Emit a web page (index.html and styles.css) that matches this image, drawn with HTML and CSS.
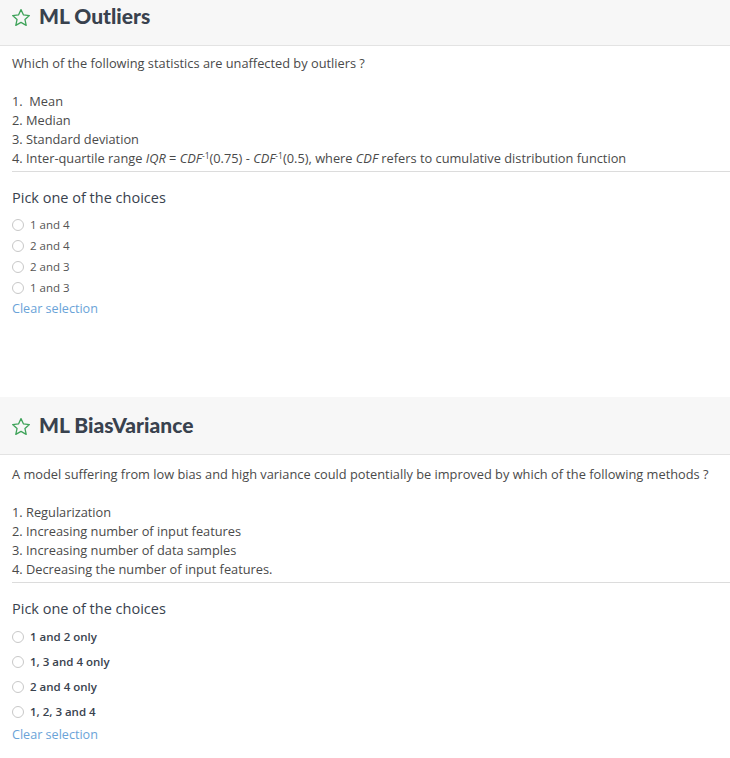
FILE: index.html
```html
<!DOCTYPE html>
<html>
<head>
<meta charset="utf-8">
<link rel="stylesheet" href="styles.css">
</head>
<body>
<section class="card card-first">
  <header class="card-head">
    <svg class="star" viewBox="0 0 20 20" width="20" height="20"><path d="M10 1.6l2.5 5.35 5.85.65-4.37 3.95 1.22 5.78L10 14.4l-5.2 2.93 1.22-5.78L1.65 7.6l5.85-.65z" fill="none" stroke="#3fa35a" stroke-width="1.3" stroke-linejoin="round"/></svg>
    <h2 class="title">ML Outliers</h2>
  </header>
  <div class="card-body">
    <p class="question">Which of the following statistics are unaffected by outliers ?</p>
    <div class="stmt">
      <div>1.&nbsp; Mean</div>
      <div>2. Median</div>
      <div>3. Standard deviation</div>
      <div>4. Inter-quartile range <i>IQR</i> = <i>CDF</i><sup>-1</sup>(0.75) - <i>CDF</i><sup>-1</sup>(0.5), where <i>CDF</i> refers to cumulative distribution function</div>
    </div>
    <h3 class="pick">Pick one of the choices</h3>
    <ul class="choices">
      <li><span class="radio"></span>1 and 4</li>
      <li><span class="radio"></span>2 and 4</li>
      <li><span class="radio"></span>2 and 3</li>
      <li><span class="radio"></span>1 and 3</li>
    </ul>
    <a class="clear">Clear selection</a>
  </div>
</section>

<section class="card card-second">
  <header class="card-head">
    <svg class="star" viewBox="0 0 20 20" width="20" height="20"><path d="M10 1.6l2.5 5.35 5.85.65-4.37 3.95 1.22 5.78L10 14.4l-5.2 2.93 1.22-5.78L1.65 7.6l5.85-.65z" fill="none" stroke="#3fa35a" stroke-width="1.3" stroke-linejoin="round"/></svg>
    <h2 class="title">ML BiasVariance</h2>
  </header>
  <div class="card-body">
    <p class="question">A model suffering from low bias and high variance could potentially be improved by which of the following methods ?</p>
    <div class="stmt">
      <div>1. Regularization</div>
      <div>2. Increasing number of input features</div>
      <div>3. Increasing number of data samples</div>
      <div>4. Decreasing the number of input features.</div>
    </div>
    <h3 class="pick">Pick one of the choices</h3>
    <ul class="choices choices-bold">
      <li><span class="radio"></span>1 and 2 only</li>
      <li><span class="radio"></span>1, 3 and 4 only</li>
      <li><span class="radio"></span>2 and 4 only</li>
      <li><span class="radio"></span>1, 2, 3 and 4</li>
    </ul>
    <a class="clear">Clear selection</a>
  </div>
</section>
</body>
</html>
```

FILE: styles.css
```css
html, body {
  margin: 0;
  padding: 0;
  background: #fff;
  font-family: "Open Sans", Lato, sans-serif;
  color: #444;
  overflow: hidden;
}

.card-first {
  margin-top: -12px;
}

.card-second {
  margin-top: 78px;
}

.card-head {
  height: 57px;
  background: #f7f7f7;
  border-bottom: 1px solid #e3e3e3;
  display: flex;
  align-items: center;
  padding-left: 11px;
  gap: 8px;
}

.star {
  display: block;
  margin-top: 2px;
}

.title {
  margin: 0 0 2px;
  font-family: Lato, "Open Sans", sans-serif;
  font-size: 21px;
  font-weight: 900;
  color: #39424e;
}

.card-body {
  padding-left: 12px;
}

.question {
  margin: 8px 0 0;
  font-size: 12.8px;
  line-height: 19px;
  color: #4a4a4a;
}

.card-second .question {
  margin-top: 10px;
}

.stmt {
  margin-top: 19px;
  font-size: 12.8px;
  line-height: 19px;
  color: #4a4a4a;
  padding-bottom: 3px;
  border-bottom: 1px solid #dcdcdc;
}

.stmt sup {
  font-size: 8.5px;
  line-height: 0;
  vertical-align: 4px;
}

.pick {
  margin: 16px 0 0;
  font-size: 14.5px;
  font-weight: 400;
  line-height: 20px;
  color: #39424e;
}

.choices {
  list-style: none;
  margin: 6px 0 0;
  padding: 0;
}

.choices li {
  display: flex;
  align-items: center;
  height: 21px;
  font-size: 11.5px;
  color: #555;
}

.choices-bold {
  margin-top: 5px;
}

.choices-bold li {
  height: 25px;
  font-weight: 600;
  color: #39424e;
}

.radio {
  width: 10px;
  height: 10px;
  border: 1px solid #c8c8c8;
  border-radius: 50%;
  margin-right: 6px;
  box-sizing: content-box;
  background: #fff;
}

.clear {
  display: block;
  font-size: 12.6px;
  line-height: 21px;
  color: #6aa3d8;
  cursor: pointer;
}
```
